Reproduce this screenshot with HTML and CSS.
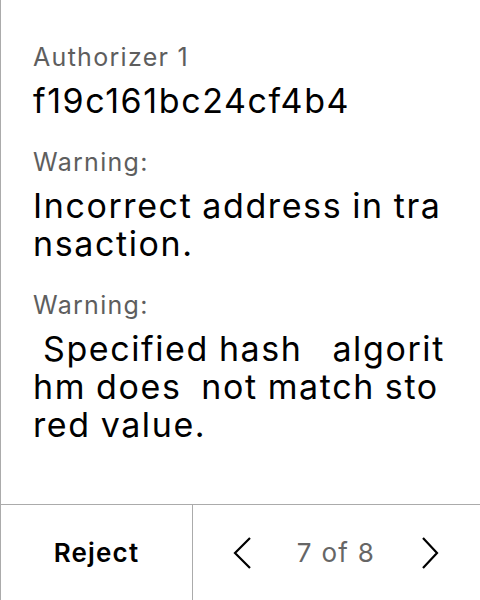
FILE: index.html
```html
<!DOCTYPE html>
<html>
<head>
<meta charset="utf-8">
<link rel="stylesheet" href="styles.css">
</head>
<body>
<div class="screen">
  <div class="content">
    <div class="field">
      <div class="label">Authorizer 1</div>
      <div class="value">f19c161bc24cf4b4</div>
    </div>
    <div class="field">
      <div class="label">Warning:</div>
      <div class="value"><span class="line">Incorrect address in tra</span><span class="line">nsaction.</span></div>
    </div>
    <div class="field">
      <div class="label">Warning:</div>
      <div class="value"><span class="line"> Specified hash   algorit</span><span class="line">hm does  not match sto</span><span class="line">red value.</span></div>
    </div>
  </div>
  <div class="footer">
    <div class="reject">Reject</div>
    <div class="pager">
      <svg class="chev" width="20" height="34" viewBox="0 0 20 34"><path d="M18 2 L3 17 L18 32" fill="none" stroke="#000" stroke-width="2.2"/></svg>
      <span class="count">7 of 8</span>
      <svg class="chev" width="20" height="34" viewBox="0 0 20 34"><path d="M3 2 L17 17 L3 32" fill="none" stroke="#000" stroke-width="2.2"/></svg>
    </div>
  </div>
</div>
</body>
</html>
```

FILE: styles.css
```css
html, body {
  margin: 0;
  padding: 0;
  background: #fff;
}
body {
  font-family: "Inter", "Noto Sans", sans-serif;
  color: #000;
}
.screen {
  width: 480px;
  height: 600px;
  box-sizing: border-box;
  border-left: 1px solid #ababab;
  display: flex;
  flex-direction: column;
}
.content {
  flex: 1;
  padding: 42px 0 0 32px;
  display: flex;
  flex-direction: column;
  gap: 27px;
}
.field {
  display: flex;
  flex-direction: column;
  gap: 10px;
}
.label {
  font-size: 25px;
  line-height: 30px;
  letter-spacing: 1.3px;
  color: #5e5e5e;
}
.value {
  font-size: 34px;
  line-height: 38px;
  letter-spacing: 1.6px;
  word-spacing: -1.2px;
  color: #000;
}
.line {
  display: block;
  white-space: pre;
}
.footer {
  height: 96px;
  border-top: 1px solid #ababab;
  display: flex;
  box-sizing: border-box;
}
.reject {
  width: 191px;
  border-right: 1px solid #ababab;
  display: flex;
  align-items: center;
  justify-content: center;
  font-size: 26px;
  font-weight: 600;
  letter-spacing: 1.2px;
}
.pager {
  flex: 1;
  display: flex;
  align-items: center;
  justify-content: space-between;
  padding: 0 40px 0 39px;
}
.count {
  font-size: 26px;
  letter-spacing: 1.3px;
  color: #666;
}
.chev {
  display: block;
}
```
